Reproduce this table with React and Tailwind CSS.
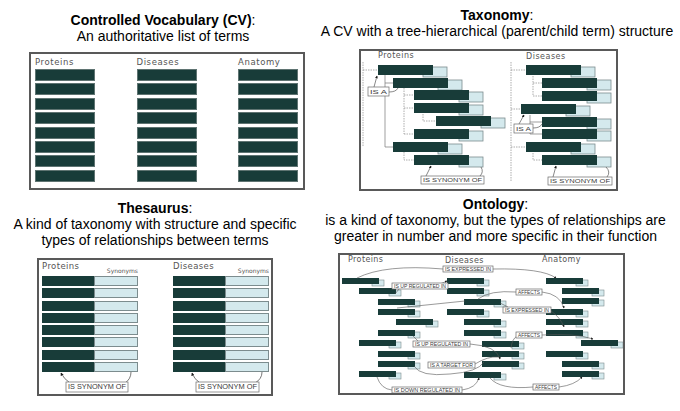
import React from 'react';

const DARK = '#183c39';
const LIGHT = '#d4e9ed';
const EDGE = '#7c8c8e';
const LINE = '#555555';

function Heading({ title, lines, className }) {
  return (
    <div className={`text-center text-[14px] leading-[16px] whitespace-nowrap text-black ${className}`}>
      <div>
        <span className="font-bold">{title}</span>:
      </div>
      {lines.map((l) => (
        <div key={l}>{l}</div>
      ))}
    </div>
  );
}

function Arrow({ id }) {
  return (
    <defs>
      <marker id={id} viewBox="0 0 6 6" refX="5" refY="3" markerWidth="4" markerHeight="4" orient="auto">
        <path d="M0,0 L6,3 L0,6 z" fill="#1a1a1a" />
      </marker>
    </defs>
  );
}

function Tag({ x, y, w, h, text, size }) {
  return (
    <g>
      <rect x={x} y={y} width={w} height={h} fill="#ffffff" stroke="#6a6a6a" strokeWidth="0.7" />
      <text
        x={x + 2}
        y={y + h / 2 + size * 0.36}
        fontSize={size}
        fill="#3a3a3a"
        fontFamily="'Liberation Sans', Arial, sans-serif"
        textLength={w - 4}
        lengthAdjust="spacingAndGlyphs"
      >
        {text}
      </text>
    </g>
  );
}

// Controlled vocabulary: three plain columns of terms
function CvBox() {
  const cols = ['Proteins', 'Diseases', 'Anatomy'];
  return (
    <div className="ml-[29px] mt-[8px] w-[276px] h-[138px] border-2 border-[#595959] pl-[4px] flex gap-[41.5px]">
      {cols.map((c) => (
        <div key={c} className="w-[60px]">
          <div className="h-[15px] pt-[2px] leading-[12px] text-[8.5px] tracking-[0.6px] text-[#555] font-['DejaVu_Sans',sans-serif]">
            {c}
          </div>
          <div className="flex flex-col gap-[2.4px]">
            {Array.from({ length: 8 }).map((_, i) => (
              <div key={i} className="h-[12px] bg-[#183c39] border border-[#5f7472]" />
            ))}
          </div>
        </div>
      ))}
    </div>
  );
}

// Taxonomy: two indented trees
const taxP = [[378, 65], [393, 78], [414, 90], [414, 103], [436, 116], [414, 129], [393, 142], [414, 155]];
const taxD = [[526, 65], [542, 78], [542, 91], [521, 104], [542, 117], [542, 129], [526, 142], [542, 155]];

function TaxBar({ x, y }) {
  return (
    <g>
      <rect x={x + 45} y={y + 2} width={24} height={10} fill={LIGHT} stroke={EDGE} strokeWidth="0.8" />
      <rect x={x} y={y} width={55} height={10} fill={DARK} />
    </g>
  );
}

function TaxonomyBox() {
  const dash = { stroke: '#8a8a8a', strokeWidth: 0.7, strokeDasharray: '1.5 1', fill: 'none' };
  const solid = { stroke: '#777', strokeWidth: 0.7, fill: 'none' };
  const rel = { stroke: LINE, strokeWidth: 0.7, fill: 'none' };
  return (
    <div className="ml-[39px] mt-[10px] w-[259px] h-[142px] border-2 border-[#595959]">
      <svg width="255" height="138" viewBox="361 51 255 138" className="block">
        <Arrow id="tax-ah" />
        <text x="378" y="58" fontSize="8" letterSpacing="0.5" fill="#555" fontFamily="'DejaVu Sans', sans-serif">Proteins</text>
        <text x="526" y="59" fontSize="8" letterSpacing="0.5" fill="#555" fontFamily="'DejaVu Sans', sans-serif">Diseases</text>

        <path d="M363,62 V147 M363,70 H378" {...dash} />
        <path d="M385,75 V147 H393 M385,83 H393" {...solid} />
        <path d="M404,88 V134 M404,95 H414 M404,108 H414 M404,134 H414" {...dash} />
        <path d="M423,114 V121 H436" {...dash} />
        <path d="M404,152 V160 H414" {...dash} />

        <path d="M511,62 V182 M511,70 H526 M511,109 H521 M511,147 H526" {...dash} />
        <path d="M533,76 V96 M533,83 H542 M533,96 H542" {...dash} />
        <path d="M530,115 V134 M530,122 H542 M530,134 H542" {...solid} />
        <path d="M533,153 V160 H542" {...dash} />

        {taxP.map(([x, y]) => <TaxBar key={`p${y}`} x={x} y={y} />)}
        {taxD.map(([x, y]) => <TaxBar key={`d${y}`} x={x} y={y} />)}

        <path d="M374,87 L377,76" {...rel} markerEnd="url(#tax-ah)" />
        <path d="M389,92 Q396,92 398,88" {...rel} />
        <Tag x={368} y={87} w={21} h={9} text="IS A" size={6} />

        <path d="M519,124 L524,115" {...rel} markerEnd="url(#tax-ah)" />
        <path d="M533,128 Q540,128 542,124" {...rel} />
        <Tag x={514} y={124} w={19} h={9} text="IS A" size={6} />

        <path d="M426,176 L431,166" {...rel} markerEnd="url(#tax-ah)" />
        <path d="M480,176 Q484,172 481,167" {...rel} />
        <Tag x={421} y={176} w={63} h={8} text="IS SYNONYM OF" size={6} />

        <path d="M553,177 L556,166" {...rel} markerEnd="url(#tax-ah)" />
        <path d="M607,177 Q611,172 606,167" {...rel} />
        <Tag x={548} y={177} w={64} h={8} text="IS SYNONYM OF" size={6} />
      </svg>
    </div>
  );
}

// Thesaurus: terms paired with synonyms
function ThesaurusBox() {
  const groups = ['Proteins', 'Diseases'];
  const rel = { stroke: LINE, strokeWidth: 0.8, fill: 'none' };
  return (
    <div className="relative ml-[37px] mt-[10px] w-[236px] h-[138px] border-2 border-[#595959] pl-[3px] flex gap-[35px]">
      {groups.map((g) => (
        <div key={g} className="w-[96px]">
          <div className="h-[16px] flex justify-between items-start">
            <span className="text-[8.5px] leading-[12px] tracking-[0.4px] text-[#555] font-['DejaVu_Sans',sans-serif]">{g}</span>
            <span className="mt-[7px] text-[6px] leading-[8px] text-[#555] font-['DejaVu_Sans',sans-serif]">Synonyms</span>
          </div>
          <div className="flex flex-col gap-[2.3px]">
            {Array.from({ length: 8 }).map((_, i) => (
              <div key={i} className="flex h-[10px]">
                <div className="w-[52px] bg-[#183c39]" />
                <div className="flex-1 bg-[#d4e9ed] border border-[#7c8c8e]" />
              </div>
            ))}
          </div>
        </div>
      ))}
      <svg width="232" height="134" viewBox="39 260 232 134" className="absolute left-0 top-0 pointer-events-none">
        <Arrow id="the-ah" />
        <path d="M70,383 Q64,379 61,373" {...rel} markerEnd="url(#the-ah)" />
        <path d="M125,383 Q131,379 131,372" {...rel} />
        <Tag x={66} y={382} w={62} h={10} text="IS SYNONYM OF" size={6.5} />
        <path d="M200,383 Q194,379 192,373" {...rel} markerEnd="url(#the-ah)" />
        <path d="M255,383 Q262,379 262,372" {...rel} />
        <Tag x={196} y={382} w={63} h={10} text="IS SYNONYM OF" size={6.5} />
      </svg>
    </div>
  );
}

// Ontology: many typed relationships across three columns
const onto = [
  [342, 278], [359, 288], [378, 299], [378, 309], [396, 319], [378, 330], [359, 340], [378, 351], [378, 361], [359, 371],
  [447, 278], [447, 288], [464, 299], [447, 309], [464, 319], [464, 330], [482, 341], [482, 351], [482, 361], [464, 372],
  [546, 278], [562, 288], [562, 298], [546, 309], [546, 319], [546, 330], [581, 340], [546, 351], [562, 361], [562, 371],
];

function OntoBar({ x, y }) {
  return (
    <g>
      <rect x={x + 30} y={y + 2} width={12} height={6} fill={LIGHT} stroke={EDGE} strokeWidth="0.6" />
      <rect x={x} y={y} width={37} height={6} fill={DARK} />
    </g>
  );
}

function OntologyBox() {
  const rel = { stroke: LINE, strokeWidth: 0.6, fill: 'none' };
  const label = { fontSize: 8, letterSpacing: 0.4, fill: '#555', fontFamily: "'DejaVu Sans', sans-serif" };
  return (
    <div className="ml-[18px] mt-[9px] w-[287px] h-[142px] border-2 border-[#595959]">
      <svg width="283" height="138" viewBox="340 255 283 138" className="block">
        <Arrow id="ont-ah" />
        <text x="348" y="262" {...label}>Proteins</text>
        <text x="445" y="263" {...label}>Diseases</text>
        <text x="542" y="262" {...label}>Anatomy</text>

        {onto.map(([x, y]) => <OntoBar key={`${x}-${y}`} x={x} y={y} />)}

        <path d="M357,278 Q385,264 443,269" {...rel} />
        <path d="M493,269 Q542,268 556,278" {...rel} markerEnd="url(#ont-ah)" />

        <path d="M395,294 L399,289" {...rel} />
        <path d="M440,284 L447,281" {...rel} markerEnd="url(#ont-ah)" />

        <path d="M478,299 Q490,290 516,292" {...rel} />
        <path d="M542,292 Q560,294 564,308" {...rel} markerEnd="url(#ont-ah)" />

        <path d="M397,308 L465,301" {...rel} />
        <path d="M500,303 L508,307" {...rel} />
        <path d="M551,311 Q560,317 564,327" {...rel} markerEnd="url(#ont-ah)" />

        <path d="M511,348 Q512,339 517,336" {...rel} />
        <path d="M542,335 Q575,333 593,339" {...rel} markerEnd="url(#ont-ah)" />

        <path d="M413,336 L418,341" {...rel} />
        <path d="M470,344 Q497,346 500,359" {...rel} markerEnd="url(#ont-ah)" />

        <path d="M414,366 Q420,377 450,374 Q478,372 484,362" {...rel} />
        <path d="M475,364 Q488,356 498,357" {...rel} />

        <path d="M377,377 Q381,389 392,390" {...rel} />
        <path d="M462,390 Q476,388 479,378" {...rel} markerEnd="url(#ont-ah)" />

        <path d="M490,378 Q500,390 533,387" {...rel} />
        <path d="M559,387 Q575,385 582,377" {...rel} markerEnd="url(#ont-ah)" />

        <Tag x={443} y={266} w={50} h={6} text="IS EXPRESSED IN" size={4.6} />
        <Tag x={392} y={283} w={56} h={6} text="IS UP REGULATED IN" size={4.6} />
        <Tag x={516} y={289} w={26} h={6} text="AFFECTS" size={4.6} />
        <Tag x={503} y={307} w={48} h={6} text="IS EXPRESSED IN" size={4.6} />
        <Tag x={516} y={332} w={26} h={6} text="AFFECTS" size={4.6} />
        <Tag x={413} y={341} w={57} h={6} text="IS UP REGULATED IN" size={4.6} />
        <Tag x={428} y={362} w={47} h={6} text="IS A TARGET FOR" size={4.6} />
        <Tag x={392} y={387} w={70} h={6} text="IS DOWN REGULATED IN" size={4.6} />
        <Tag x={533} y={384} w={26} h={6} text="AFFECTS" size={4.6} />
      </svg>
    </div>
  );
}

export default function App() {
  return (
    <div className="w-[680px] h-[411px] bg-white overflow-hidden font-['Liberation_Sans',Arial,sans-serif]">
      <div className="flex h-[195px]">
        <div className="w-[320px] pt-[12px]">
          <Heading className="w-[326px]" title="Controlled Vocabulary (CV)" lines={['An authoritative list of terms']} />
          <CvBox />
        </div>
        <div className="w-[360px] pt-[7px]">
          <Heading className="w-[354px]" title="Taxonomy" lines={['A CV with a tree-hierarchical (parent/child term) structure']} />
          <TaxonomyBox />
        </div>
      </div>
      <div className="flex">
        <div className="w-[320px] pt-[5px]">
          <Heading
            className="w-[310px]"
            title="Thesaurus"
            lines={['A kind of taxonomy with structure and specific', 'types of relationships between terms']}
          />
          <ThesaurusBox />
        </div>
        <div className="w-[360px] pt-[1px]">
          <Heading
            className="w-[351px]"
            title="Ontology"
            lines={['is a kind of taxonomy, but the types of relationships are', 'greater in number and more specific in their function']}
          />
          <OntologyBox />
        </div>
      </div>
    </div>
  );
}
